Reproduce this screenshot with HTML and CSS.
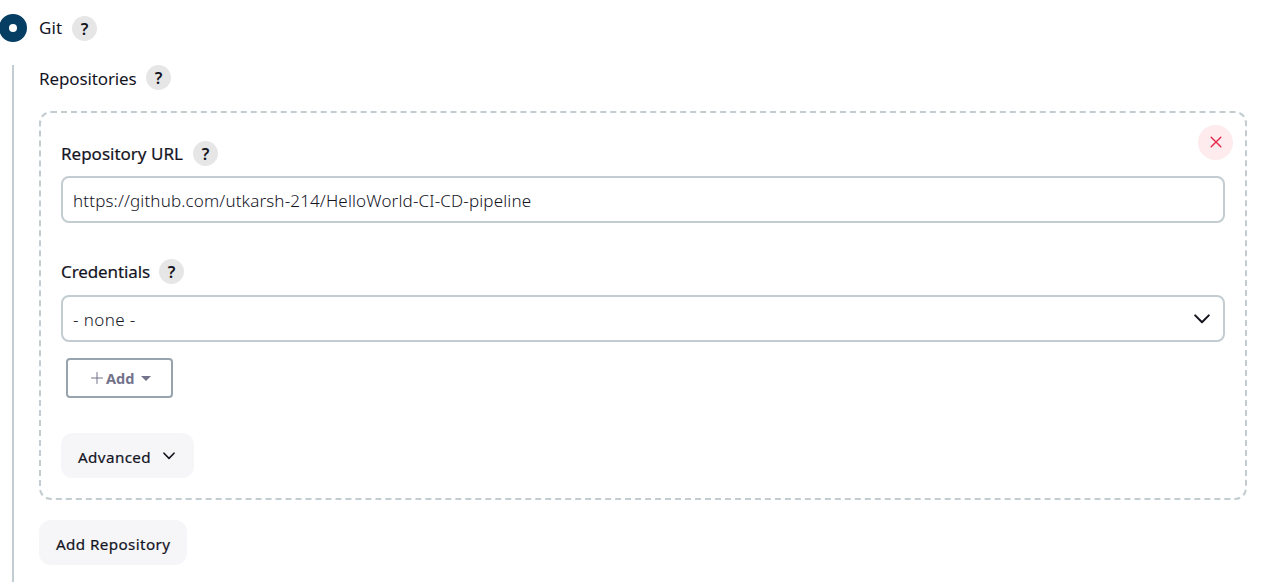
FILE: index.html
```html
<!DOCTYPE html>
<html lang="en">
<head>
<meta charset="utf-8">
<title>Git repository configuration</title>
<link rel="stylesheet" href="styles.css">
</head>
<body>
<main class="scm">
  <div class="choice"><span class="radio"></span><span class="choice-name">Git</span><span class="help">?</span></div>
  <section class="nested">
    <div class="label label-repositories"><span class="w-repositories">Repositories</span><span class="help">?</span></div>
    <div class="repository">
      <button class="delete" aria-label="Delete"><svg width="12" height="12" viewBox="0 0 12 12"><path d="M1.2 1.2 10.8 10.8M10.8 1.2 1.2 10.8"/></svg></button>
      <div class="label"><span class="w-url">Repository URL</span><span class="help">?</span></div>
      <div class="field"><span class="url">https://github.com/utkarsh-214/HelloWorld-CI-CD-pipeline</span></div>
      <div class="label label-credentials"><span class="w-credentials">Credentials</span><span class="help">?</span></div>
      <div class="field select"><span class="none">- none -</span><svg width="16" height="10" viewBox="0 0 16 10"><path d="M1.2 1.4 8 8.2 14.8 1.4"/></svg></div>
      <button class="add"><svg class="plus" width="12" height="12" viewBox="0 0 12 12"><path d="M6 .5V11.5M.5 6H11.5"/></svg><span>Add</span><svg class="caret" width="10" height="5" viewBox="0 0 10 5"><path d="M0 0H10L5 5Z"/></svg></button>
      <button class="button advanced"><span>Advanced</span><svg width="12" height="8" viewBox="0 0 12 8"><path d="M1 1.2 6 6.4 11 1.2"/></svg></button>
    </div>
    <button class="button add-repository">Add Repository</button>
  </section>
</main>
</body>
</html>
```
FILE: styles.css
```css
* { box-sizing: border-box; }
body { margin: 0; height: 582px; overflow: hidden; background: #fff; color: #14141f; font: 400 17px/24px "Noto Sans", "Open Sans", sans-serif; }
button { display: flex; align-items: center; margin: 0; padding: 0; border: 0; font: inherit; color: inherit; }
svg { display: block; flex: none; fill: none; stroke: currentColor; stroke-linecap: round; stroke-linejoin: round; }
.scm { height: 582px; overflow: hidden; }
.choice { display: flex; align-items: center; height: 28px; margin: 14px 0 0 -1px; }
.radio { width: 28px; height: 28px; border: 10px solid #063e63; border-radius: 50%; }
.choice-name { width: 33px; padding-left: 12px; margin-right: 12px; letter-spacing: .1px; white-space: nowrap; }
.help { width: 25px; height: 25px; flex: none; border-radius: 50%; background: #e6e6e6; font: 600 16.5px/26px "Noto Sans", sans-serif; letter-spacing: 0; text-align: center; -webkit-text-stroke: 0; }
.nested { height: 517px; margin: 23px 23px 0 12px; padding-left: 25px; border-left: 2px solid #c3cdd1; }
.label { display: flex; align-items: center; height: 25px; white-space: nowrap; letter-spacing: 0; -webkit-text-stroke: .2px; }
.label-repositories { letter-spacing: -.12px; -webkit-text-stroke: 0; }
.w-repositories { width: 107px; padding-top: 2px; }
.w-url { width: 132px; }
.w-credentials { width: 98px; }
.repository { position: relative; height: 389px; margin-top: 21px; padding: 28px 20px 0; border: 2px dashed #c3cdd1; border-radius: 12px; }
.delete { position: absolute; top: 12px; right: 12px; justify-content: center; width: 35px; height: 35px; padding: 0 0 1px 1px; border-radius: 50%; background: #fdebed; color: #e6254a; }
.delete svg { stroke-width: 1.4; }
.field { display: flex; align-items: center; height: 47px; margin-top: 10px; padding: 2px 13px 0 10px; border: 2px solid #c3cdd1; border-radius: 8px; font-weight: 300; letter-spacing: .15px; white-space: nowrap; }
.label-credentials { margin-top: 36px; letter-spacing: -.1px; }
.select { margin-top: 11px; justify-content: space-between; }
.none { letter-spacing: .4px; }
.select svg { margin-top: -2px; stroke-width: 2; }
.add { width: 107px; height: 40px; margin: 16px 0 0 5px; padding-left: 23px; border: 2px solid #98a4ad; border-radius: 4px; background: #fff; color: #73738c; font-size: 14.5px; font-weight: 700; }
.add span { width: 35px; margin-left: 3px; text-align: left; }
.plus { stroke-width: 1; }
.caret { fill: currentColor; stroke: none; }
.button { height: 45px; padding: 2px 17px 0; border-radius: 12px; background: #f6f6f9; font-size: 15.2px; letter-spacing: .4px; white-space: nowrap; -webkit-text-stroke: .2px; }
.advanced { width: 133px; margin-top: 35px; }
.advanced span { width: 85px; text-align: left; }
.advanced svg { margin-top: -2px; stroke-width: 1.6; }
.add-repository { width: 148px; margin-top: 20px; }
```
